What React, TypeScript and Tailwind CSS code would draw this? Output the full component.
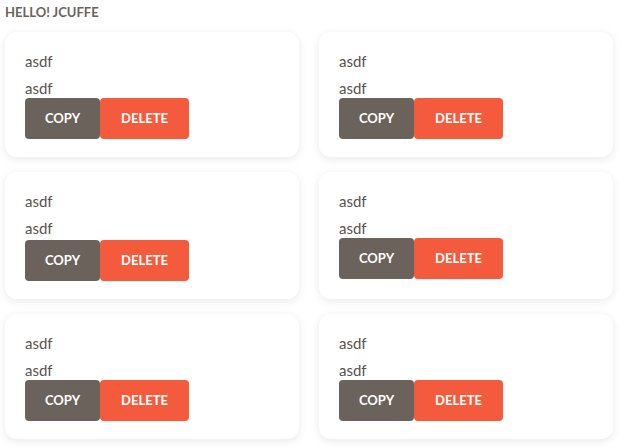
const cards = [
  { id: 1, name: "asdf", value: "asdf" },
  { id: 2, name: "asdf", value: "asdf" },
  { id: 3, name: "asdf", value: "asdf", loose: true },
  { id: 4, name: "asdf", value: "asdf" },
  { id: 5, name: "asdf", value: "asdf" },
  { id: 6, name: "asdf", value: "asdf" },
];

function Card({ name, value, loose }: { name: string; value: string; loose?: boolean }) {
  return (
    <div className="rounded-xl bg-white px-5 pt-[19px] pb-[18px] shadow-[0_2px_10px_rgba(0,0,0,0.09)]">
      <p className="mb-[7px] text-[15px] leading-5 text-[#5a524d]">{name}</p>
      <p className={loose ? "mb-[2px] text-[15px] leading-5 text-[#5a524d]" : "text-[15px] leading-5 text-[#5a524d]"}>
        {value}
      </p>
      <div className="flex">
        <button className="h-[41px] w-[75px] rounded-[4px] bg-[#6b625b] text-[13px] font-bold text-white">
          COPY
        </button>
        <button className="h-[41px] w-[89px] rounded-[4px] bg-[#f45b3c] text-[13px] font-bold text-white">
          DELETE
        </button>
      </div>
    </div>
  );
}

export default function App() {
  return (
    <div className="min-h-screen bg-white px-[5px] pt-[5px] font-['Lato',sans-serif]">
      <h1 className="text-[13px] leading-[14px] font-bold text-[#6b625b]">HELLO! JCUFFE</h1>
      <div className="mt-[13px] grid grid-cols-[294px_294px] gap-x-5 gap-y-[15px]">
        {cards.map((card) => (
          <Card key={card.id} name={card.name} value={card.value} loose={card.loose} />
        ))}
      </div>
    </div>
  );
}
